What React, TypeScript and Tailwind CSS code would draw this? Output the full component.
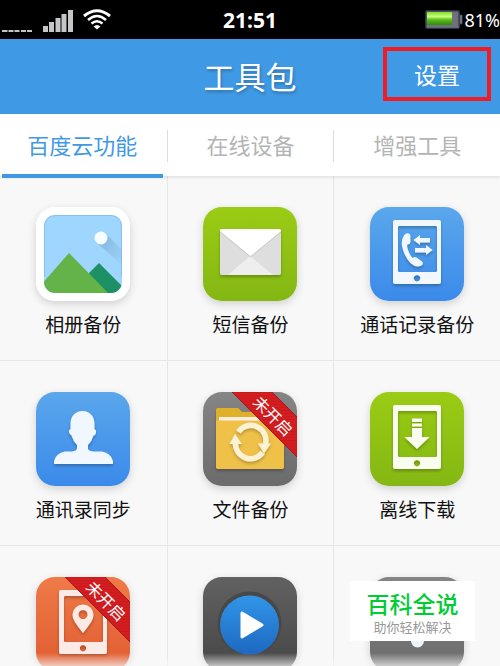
import type { ReactNode } from "react";

const TABS = ["百度云功能", "在线设备", "增强工具"];

function TileDefs() {
  return (
    <svg className="absolute h-0 w-0" aria-hidden="true">
      <defs>
        <linearGradient id="blue" x1="0" y1="0" x2="0" y2="1">
          <stop offset="0" stopColor="#5aa7ec" />
          <stop offset="1" stopColor="#3b8aea" />
        </linearGradient>
        <linearGradient id="green" x1="0" y1="0" x2="0" y2="1">
          <stop offset="0" stopColor="#9acc14" />
          <stop offset="1" stopColor="#84b713" />
        </linearGradient>
        <linearGradient id="grey" x1="0" y1="0" x2="0" y2="1">
          <stop offset="0" stopColor="#858585" />
          <stop offset="1" stopColor="#6b6b6b" />
        </linearGradient>
        <linearGradient id="orange" x1="0" y1="0" x2="0" y2="1">
          <stop offset="0" stopColor="#ef7a48" />
          <stop offset="1" stopColor="#e05c30" />
        </linearGradient>
        <linearGradient id="dark" x1="0" y1="0" x2="0" y2="1">
          <stop offset="0" stopColor="#616161" />
          <stop offset="1" stopColor="#464646" />
        </linearGradient>
        <linearGradient id="play" x1="0" y1="0" x2="0" y2="1">
          <stop offset="0" stopColor="#3196e8" />
          <stop offset="1" stopColor="#1d68c0" />
        </linearGradient>
        <linearGradient id="sunShade" x1="0" y1="0" x2="1" y2="1">
          <stop offset="0" stopColor="#7fb2da" />
          <stop offset="1" stopColor="#9fd3fb" />
        </linearGradient>
        <pattern id="weave" width="4" height="3" patternUnits="userSpaceOnUse">
          <rect width="4" height="3" fill="#d41d20" />
          <rect width="4" height="1" fill="#c91a1d" />
        </pattern>
        <clipPath id="photo">
          <rect x="8" y="8" width="78" height="78" rx="11" />
        </clipPath>
        <clipPath id="tile">
          <rect width="94" height="94" rx="19" />
        </clipPath>
        <filter id="soft" x="-20%" y="-20%" width="140%" height="150%">
          <feDropShadow dx="0" dy="2" stdDeviation="1.5" floodOpacity="0.25" />
        </filter>
      </defs>
    </svg>
  );
}

function Ribbon() {
  return (
    <>
      <g clipPath="url(#tile)">
        <path d="M29 0H69L94 25V65Z" fill="url(#weave)" />
        <path d="M29 0L94 65M69 0L94 25" stroke="#a81518" strokeWidth="1" />
      </g>
      <text
        transform="translate(70 24) rotate(45)"
        textAnchor="middle"
        y="6"
        fontSize="16"
        fill="#fff"
        className="font-['Noto_Sans_CJK_SC',sans-serif]"
      >
        未开启
      </text>
    </>
  );
}

function Tile({ fill, children }: { fill: string; children?: ReactNode }) {
  return (
    <svg
      viewBox="0 0 94 94"
      className="h-[94px] w-[94px] overflow-visible rounded-[19px] shadow-[0_3px_8px_rgba(0,0,0,0.16)]"
      aria-hidden="true"
    >
      <rect width="94" height="94" rx="19" fill={fill} />
      {children}
    </svg>
  );
}

// hollow tablet body with a cut-out screen and home button
function Tablet({ fill, children }: { fill: string; children?: ReactNode }) {
  return (
    <g fill={fill} filter="url(#soft)">
      <path
        fillRule="evenodd"
        d="M25 13H69Q71 13 71 15V75Q71 77 69 77H25Q23 77 23 75V15Q23 13 25 13ZM29 19Q28 19 28 20V64Q28 65 29 65H66Q67 65 67 64V20Q67 19 66 19ZM47 68A3.2 3.2 0 1 0 47.01 68Z"
      />
      {children}
    </g>
  );
}

function PhotoIcon() {
  return (
    <Tile fill="#fff">
      <g clipPath="url(#photo)">
        <rect x="8" y="8" width="78" height="78" fill="#9fd6ff" />
        <path d="M69 26L86 43V58L60 35Z" fill="url(#sunShade)" />
        <circle cx="65" cy="31" r="6.5" fill="#f7fcff" />
        <path d="M53 66L63 56L90 83V90H60Z" fill="#1d9064" />
        <path d="M5 78L33 46L76 90H5Z" fill="#64b349" />
      </g>
      <path
        d="M8.5 70V20Q8.5 8.5 20 8.5H74Q85.5 8.5 85.5 20V70"
        fill="none"
        stroke="#6fa9d4"
        strokeOpacity="0.5"
      />
    </Tile>
  );
}

function MailIcon() {
  return (
    <Tile fill="url(#green)">
      <g filter="url(#soft)">
        <rect x="17" y="22" width="61" height="46" rx="2" fill="#dedede" />
        <path d="M25 68L47 49L70 68Z" fill="#eeeeee" />
        <path d="M17 25L47.5 50L78 25" fill="none" stroke="#c9c9c9" strokeWidth="1" />
        <path d="M17 24Q17 22 19 22H76Q78 22 78 24L47.5 49Z" fill="#fff" />
      </g>
    </Tile>
  );
}

function CallIcon() {
  return (
    <Tile fill="url(#blue)">
      <Tablet fill="#f0f7fe">
        <path d="M36 26.5Q39.5 25.5 40.3 28L40.5 35Q40 37.5 37.5 37.5Q36.5 38.5 38 43Q40 48.5 42.5 51Q45 49.5 46.5 50.5L52 54.5Q54 57 51.5 58.5Q46 61 41 56.5Q34.5 50.5 32 39Q31 30 36 26.5Z" />
        <path d="M43.5 33L50 28V31H60V35.5H50V38Z" />
        <path d="M62.5 43L56 38V41H45V45.5H56V48Z" />
      </Tablet>
    </Tile>
  );
}

function ContactIcon() {
  return (
    <Tile fill="url(#blue)">
      <path
        filter="url(#soft)"
        fill="#f1f7fe"
        d="M46.5 19C54 19 58.5 24.5 58.5 32V37.5Q60.5 37.5 60 40.5Q59.5 43.5 57.5 43.5Q56 49 52 53V57Q53 59 58 59.5H66Q75 61 77 69V72H18V69Q20 61 29 59.5H36Q41 59 41 56V53Q37 49 35.5 43.5Q33.5 43 33 40Q32.5 37.5 34.5 37.5V32C34.5 24.5 39 19 46.5 19Z"
      />
    </Tile>
  );
}

function FolderIcon() {
  return (
    <Tile fill="url(#grey)">
      <g filter="url(#soft)">
        <path d="M15 16H35L39 20H79Q81 20 81 22V76H13V18Q13 16 15 16Z" fill="#dfb02c" />
        <rect x="16" y="25" width="62" height="6" fill="#fbeee0" />
        <path d="M13 28.5H81V75Q81 77 79 77H15Q13 77 13 75Z" fill="#efc148" />
      </g>
      <g filter="url(#soft)">
        <path
          d="M35.5 40A15 15 0 0 1 62.5 52M59.5 60.5A15 15 0 0 1 32.5 50"
          fill="none"
          stroke="#fbf1d5"
          strokeWidth="5.5"
        />
        <path d="M55 51.5H68L61 61.5ZM26.5 52H39L32 42Z" fill="#fbf1d5" />
      </g>
      <Ribbon />
    </Tile>
  );
}

function DownloadIcon() {
  return (
    <Tile fill="url(#green)">
      <Tablet fill="#f9fdf0">
        <path d="M42 26.5H52V30H42ZM42 31.5H52V34.5H42ZM42 36H52V45H59.5L47 57L34.5 45H42Z" />
      </Tablet>
    </Tile>
  );
}

function LocationIcon() {
  return (
    <Tile fill="url(#orange)">
      <Tablet fill="#fbeae5">
        <path
          fillRule="evenodd"
          d="M47 56Q42 50 38.5 44.5Q36.5 41 36.5 38A10.5 10.5 0 0 1 57.5 38Q57.5 41 55.5 44.5Q52 50 47 56ZM47 33A4.5 4.5 0 1 0 47.01 33Z"
        />
      </Tablet>
      <Ribbon />
    </Tile>
  );
}

function PlayIcon() {
  return (
    <Tile fill="url(#dark)">
      <circle cx="46.5" cy="46.5" r="32" fill="#484848" />
      <circle cx="46.5" cy="48" r="29.5" fill="url(#play)" />
      <path
        d="M39 36L59 48L39 60Z"
        fill="#fff"
        stroke="#fff"
        strokeWidth="3"
        strokeLinejoin="round"
      />
    </Tile>
  );
}

function CameraIcon() {
  return (
    <Tile fill="url(#grey)">
      <circle cx="47.5" cy="64" r="6.5" fill="#edf4fb" />
    </Tile>
  );
}

const TOOLS = [
  { id: "photo", name: "相册备份", Icon: PhotoIcon },
  { id: "sms", name: "短信备份", Icon: MailIcon },
  { id: "calls", name: "通话记录备份", Icon: CallIcon },
  { id: "contacts", name: "通讯录同步", Icon: ContactIcon },
  { id: "files", name: "文件备份", Icon: FolderIcon },
  { id: "offline", name: "离线下载", Icon: DownloadIcon },
  { id: "location", Icon: LocationIcon },
  { id: "player", Icon: PlayIcon },
  { id: "camera", Icon: CameraIcon },
];

function StatusBar() {
  return (
    <div className="grid h-[39px] shrink-0 grid-cols-[1fr_auto_1fr] items-center bg-black font-['Noto_Sans',sans-serif] text-white">
      <svg viewBox="0 0 112 39" className="h-[39px] w-[112px]" aria-hidden="true">
        <path
          d="M2 31H7.5M8.5 31H13.5M14.5 31H19.5M21 31H26M27 31H32"
          stroke="#c4c4c4"
          strokeWidth="2"
        />
        <path
          d="M43 26H48V32H43ZM49 22H54V32H49ZM55.5 18H60.5V32H55.5ZM61.5 14H66.5V32H61.5ZM68 10H73V32H68Z"
          fill="#c4c7c8"
        />
        <g fill="none" stroke="#fff" strokeWidth="3">
          <path d="M84 16Q97 5.5 110 16" />
          <path d="M88 20Q97 12 106 20" strokeWidth="2.5" />
          <path d="M91.5 23.5Q97 19 102.5 23.5" strokeWidth="2.5" />
        </g>
        <path d="M93.5 26.5Q97 23.5 100.5 26.5L97 29.5Z" fill="#fff" />
      </svg>
      <span className="text-[21px] leading-7 font-bold">21:51</span>
      <div className="flex items-center justify-end">
        <svg viewBox="0 0 39 20" className="h-5 w-[39px]" aria-hidden="true">
          <defs>
            <linearGradient id="charge" x1="0" y1="0" x2="0" y2="1">
              <stop offset="0" stopColor="#7fdd2c" />
              <stop offset="0.35" stopColor="#c6ff7a" />
              <stop offset="0.6" stopColor="#5dbb1c" />
              <stop offset="1" stopColor="#2f8a0e" />
            </linearGradient>
          </defs>
          <rect x="1" y="1" width="33" height="17" rx="1" fill="#6f7078" stroke="#3f4657" strokeWidth="1.5" />
          <rect x="2" y="2" width="25" height="13" fill="url(#charge)" />
          <path d="M2 17H34" stroke="#6d7a8c" />
          <path d="M35 5H37V14H35Z" fill="#9a9ea6" stroke="#3f4657" />
        </svg>
        <span className="text-lg leading-7">81%</span>
      </div>
    </div>
  );
}

export default function App() {
  return (
    <div className="relative flex h-screen flex-col overflow-hidden bg-[#f8f8f8] font-['Noto_Sans_CJK_SC',sans-serif]">
      <TileDefs />
      <StatusBar />

      <header className="grid h-[75px] shrink-0 grid-cols-[1fr_auto_1fr] items-center bg-[#3f99e4] text-white">
        <h1 className="col-start-2 pb-0.5 text-[31px] leading-10 [text-shadow:1px_2px_3px_rgba(0,0,0,0.25)]">
          工具包
        </h1>
        <button className="mr-[9px] mb-[5px] h-[54px] w-[108px] justify-self-end border-4 border-[#ee1c24] text-[23px] leading-8">
          设置
        </button>
      </header>

      <nav className="relative grid h-[62px] shrink-0 grid-cols-3 bg-white shadow-[0_2px_2px_rgba(0,0,0,0.08)]">
        {TABS.map((tab, i) => (
          <button
            key={tab}
            className={
              i === 0
                ? "mr-1 ml-0.5 border-b-4 border-[#3f99e4] text-[22px] leading-8 text-[#3f99e4]"
                : "my-4 border-l border-[#dcdcdc] pb-1 text-[22px] leading-7 text-[#b4b4b4]"
            }
          >
            {tab}
          </button>
        ))}
      </nav>

      <main className="min-h-0 flex-1 overflow-hidden">
        <ul className="grid grid-cols-3">
          {TOOLS.map(({ id, name, Icon }, i) => (
            <li
              key={id}
              className={i % 3 === 0 ? "border-b border-[#e6e6e6]" : "border-b border-l border-[#e6e6e6]"}
            >
              <a href="#" className="flex flex-col items-center gap-[9px] pt-[31px] pb-[22px]">
                <Icon />
                {name && <span className="text-[19px] leading-7 text-[#111]">{name}</span>}
              </a>
            </li>
          ))}
        </ul>
      </main>

      <div className="absolute inset-x-0 bottom-0 h-[13px] bg-linear-to-b from-[#f8f8f8]/0 to-[#f8f8f8]/70" />

      <aside className="absolute right-[25px] bottom-[25px] flex h-[60px] w-[125px] flex-col items-center bg-white pt-2">
        <strong className="text-[23px] leading-7 font-medium text-[#0c3]">百科全说</strong>
        <span className="text-[13px] leading-5 text-[#999]">助你轻松解决</span>
      </aside>
    </div>
  );
}
